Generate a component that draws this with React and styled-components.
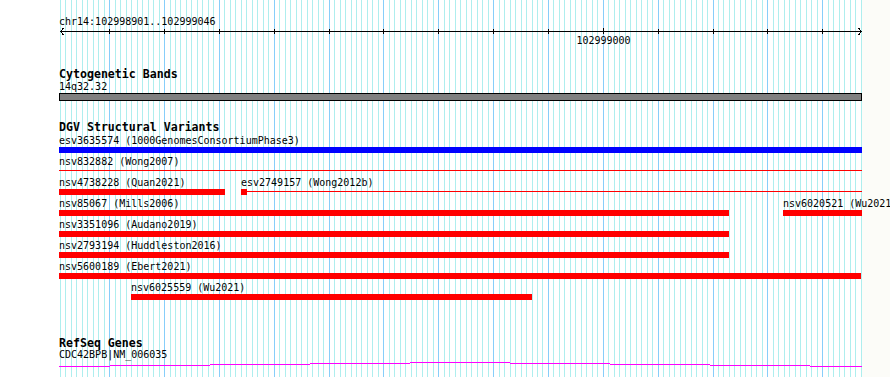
import React from 'react';
import styled, { createGlobalStyle } from 'styled-components';

const GlobalStyle = createGlobalStyle`
  html, body {
    margin: 0;
    padding: 0;
    background: #fff;
  }
`;

const START = 102998901;
const BP_COUNT = 146;
const ORIGIN = 59.8;
const BP_PX = 5.485;
const LEFT = 59;

const bpX = (i) => Math.round(ORIGIN + i * BP_PX);

const Page = styled.div`
  position: relative;
  width: 890px;
  height: 377px;
  overflow: hidden;
  background: linear-gradient(to right, #ffffff 862px, #fcfcf8 862px);
  font-family: 'DejaVu Sans Mono', 'Liberation Mono', monospace;
  color: #000;
`;

const GridLayer = styled.svg`
  position: absolute;
  top: 0;
  left: 0;
  z-index: 0;
`;

const Tracks = styled.div`
  position: relative;
  z-index: 1;
  display: flex;
  flex-direction: column;
  padding-left: ${LEFT}px;
`;

const Ruler = styled.div`
  display: flex;
  flex-direction: column;
`;

const Text = styled.div`
  font-size: 10px;
  line-height: 12px;
  height: 12px;
  white-space: nowrap;
  margin-top: ${(p) => p.$mt || 0}px;
`;

const Title = styled.div`
  font-size: 11.6px;
  font-weight: bold;
  line-height: 12px;
  height: 12px;
  white-space: nowrap;
  margin-top: ${(p) => p.$mt || 0}px;
`;

const Axis = styled.svg`
  display: block;
`;

const TickRow = styled.div`
  position: relative;
  height: 12px;
`;

const TickLabel = styled.span`
  position: absolute;
  top: 0;
  font-size: 10px;
  line-height: 12px;
  transform: translateX(-50%);
  white-space: nowrap;
`;

const Band = styled.div`
  box-sizing: border-box;
  width: 803px;
  height: 8px;
  background: #808080;
  border: 1px solid #000;
`;

const Rows = styled.div`
  display: flex;
  flex-direction: column;
  margin-top: 2px;
`;

const Row = styled.div`
  position: relative;
  height: 21px;
`;

const Feature = styled.div`
  position: absolute;
  top: 0;
  display: flex;
  flex-direction: column;
`;

const Bar = styled.div`
  height: 6px;
  background: ${(p) => p.$color};
`;

const Span = styled.div`
  display: flex;
  height: 6px;
`;

const Block = styled.div`
  width: 6px;
  height: 6px;
  background: ${(p) => p.$color};
`;

const Thin = styled.div`
  flex: 1;
  height: 1px;
  margin-top: 2px;
  background: ${(p) => p.$color};
`;

const GeneLine = styled.svg`
  display: block;
`;

const RED = '#ff0000';
const BLUE = '#0000ff';

const dgvRows = [
  [{ label: 'esv3635574 (1000GenomesConsortiumPhase3)', x: 59, end: 862, color: BLUE, kind: 'bar' }],
  [{ label: 'nsv832882 (Wong2007)', x: 59, end: 862, color: RED, kind: 'line' }],
  [
    { label: 'nsv4738228 (Quan2021)', x: 59, end: 225, color: RED, kind: 'bar' },
    { label: 'esv2749157 (Wong2012b)', x: 241, end: 862, color: RED, kind: 'block' },
  ],
  [
    { label: 'nsv85067 (Mills2006)', x: 59, end: 729, color: RED, kind: 'bar' },
    { label: 'nsv6020521 (Wu2021)', x: 783, end: 862, color: RED, kind: 'bar' },
  ],
  [{ label: 'nsv3351096 (Audano2019)', x: 59, end: 729, color: RED, kind: 'bar' }],
  [{ label: 'nsv2793194 (Huddleston2016)', x: 59, end: 729, color: RED, kind: 'bar' }],
  [{ label: 'nsv5600189 (Ebert2021)', x: 59, end: 861, color: RED, kind: 'bar' }],
  [{ label: 'nsv6025559 (Wu2021)', x: 131, end: 532, color: RED, kind: 'bar' }],
];

// gene model steps: [from, to, y]
const geneSteps = [
  [59, 110, 366], [110, 210, 365], [210, 310, 364], [310, 410, 363], [410, 510, 362],
  [510, 610, 363], [610, 710, 364], [710, 810, 365], [810, 862, 366],
];

const Grid = () => {
  const lines = [];
  for (let i = 0; i <= BP_COUNT; i++) {
    const major = (START + i) % 10 === 0;
    lines.push(
      <rect key={i} x={bpX(i)} y={0} width={1} height={377} fill={major ? '#87cefa' : '#aeeeee'} />
    );
  }
  return (
    <GridLayer width={890} height={377} shapeRendering="crispEdges">
      {lines}
    </GridLayer>
  );
};

const ScaleBar = () => {
  const ticks = [];
  for (let i = 0; i <= BP_COUNT; i++) {
    if ((START + i) % 10 !== 0) continue;
    const major = (START + i) % 100 === 0;
    ticks.push(<rect key={i} x={bpX(i) - LEFT} y={major ? 0 : 1} width={1} height={major ? 6 : 5} fill="#000" />);
  }
  return (
    <Axis width={805} height={7} shapeRendering="crispEdges">
      <rect x={1} y={3} width={802} height={1} fill="#000" />
      <polyline points="4.5,0 1.5,3.5 4.5,7" fill="none" stroke="#000" />
      <polyline points="799.5,0 802.5,3.5 799.5,7" fill="none" stroke="#000" />
      {ticks}
    </Axis>
  );
};

const DgvFeature = ({ f }) => {
  const width = f.end - f.x;
  return (
    <Feature style={{ left: f.x - LEFT }}>
      <Text>{f.label}</Text>
      {f.kind === 'bar' && <Bar $color={f.color} style={{ width }} />}
      {f.kind === 'line' && (
        <Span style={{ width }}>
          <Thin $color={f.color} />
        </Span>
      )}
      {f.kind === 'block' && (
        <Span style={{ width }}>
          <Block $color={f.color} />
          <Thin $color={f.color} />
        </Span>
      )}
    </Feature>
  );
};

export default function App() {
  const majorIndex = 102999000 - START;
  return (
    <Page>
      <GlobalStyle />
      <Grid />
      <Tracks>
        <Ruler>
          <Text $mt={16}>chr14:102998901..102999046</Text>
          <ScaleBar />
          <TickRow>
            <TickLabel style={{ left: bpX(majorIndex) - LEFT + 0.5 }}>102999000</TickLabel>
          </TickRow>
        </Ruler>

        <Title $mt={21}>Cytogenetic Bands</Title>
        <Text $mt={1}>14q32.32</Text>
        <Band />

        <Title $mt={20}>DGV Structural Variants</Title>
        <Rows>
          {dgvRows.map((row, i) => (
            <Row key={i}>
              {row.map((f) => (
                <DgvFeature key={f.label} f={f} />
              ))}
            </Row>
          ))}
        </Rows>

        <Title $mt={34}>RefSeq Genes</Title>
        <Text>CDC42BPB|NM_006035</Text>
        <GeneLine width={805} height={6} shapeRendering="crispEdges">
          {geneSteps.map(([a, b, y]) => (
            <rect key={a} x={a - LEFT} y={y - 361} width={b - a} height={1} fill="#ff00ff" />
          ))}
        </GeneLine>
      </Tracks>
    </Page>
  );
}
